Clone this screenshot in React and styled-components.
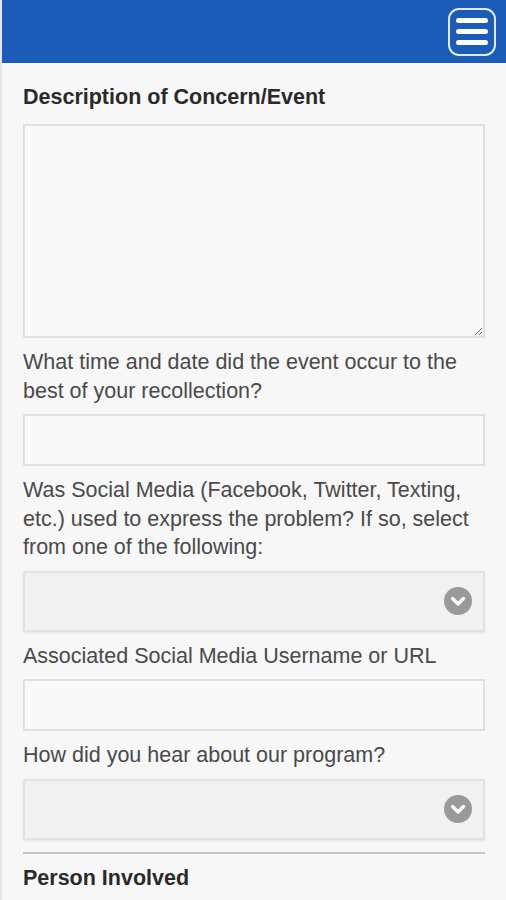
import React from 'react'
import styled, { createGlobalStyle } from 'styled-components'

const Global = createGlobalStyle`
  html, body {
    margin: 0;
    padding: 0;
    background: #f7f7f7;
    font-family: "Liberation Sans", Arial, sans-serif;
  }
`

const Page = styled.div`
  width: 506px;
  height: 900px;
  overflow: hidden;
  background: #f7f7f7;
  border-left: 2px solid #e6e6e6;
  box-sizing: border-box;
`

const Header = styled.header`
  height: 63px;
  background: #1b5cb8;
  display: flex;
  justify-content: flex-end;
  align-items: center;
  padding-right: 10px;
`

const MenuBtn = styled.button`
  width: 48px;
  height: 48px;
  border: 2px solid #dfe9f7;
  border-radius: 11px;
  background: transparent;
  display: flex;
  flex-direction: column;
  justify-content: center;
  align-items: center;
  gap: 6px;
  padding: 0;
  span {
    display: block;
    width: 32px;
    height: 5px;
    border-radius: 3px;
    background: #fff;
  }
`

const Form = styled.form`
  padding: 20px 21px 0 21px;
  display: flex;
  flex-direction: column;
`

const Heading = styled.h3`
  margin: 0 0 13px;
  font-size: 21.5px;
  font-weight: bold;
  color: #2a2a2a;
  line-height: 28px;
`

const Label = styled.label`
  font-size: 21.5px;
  line-height: 28.5px;
  color: #4a4a4a;
  margin: 10px 0 9px;
`

const TextArea = styled.textarea`
  height: 214px;
  border: 2px solid #e0e0e0;
  background: #f9f9f9;
  resize: vertical;
  box-sizing: border-box;
`

const Input = styled.input`
  height: 52px;
  border: 2px solid #e0e0e0;
  background: #f9f9f9;
  box-sizing: border-box;
`

const Select = styled.div`
  height: 61px;
  border: 2px solid #e2e2e2;
  background: #f1f1f1;
  box-sizing: border-box;
  display: flex;
  justify-content: flex-end;
  align-items: center;
  padding-right: 11px;
  box-shadow: 0 1px 2px rgba(0,0,0,0.08);
`

const Divider = styled.hr`
  border: none;
  border-top: 2px solid #c8c8c8;
  margin: 12px 0 10px;
`

const Chevron = () => (
  <svg width="28" height="28" viewBox="0 0 28 28">
    <circle cx="14" cy="14" r="14" fill="#9a9a9a" />
    <path d="M8.5 11.5 L14 17 L19.5 11.5" stroke="#fff" strokeWidth="3.2" fill="none" strokeLinecap="round" strokeLinejoin="round" />
  </svg>
)

const Cut = styled.div`
  font-size: 18px;
  color: #888;
  margin-top: -4px;
`

export default function App() {
  return (
    <Page>
      <Global />
      <Header>
        <MenuBtn type="button"><span /><span /><span /></MenuBtn>
      </Header>
      <Form>
        <Heading>Description of Concern/Event</Heading>
        <TextArea />
        <Label>What time and date did the event occur to the best of your recollection?</Label>
        <Input />
        <Label>Was Social Media (Facebook, Twitter, Texting, etc.) used to express the problem? If so, select from one of the following:</Label>
        <Select><Chevron /></Select>
        <Label>Associated Social Media Username or URL</Label>
        <Input />
        <Label>How did you hear about our program?</Label>
        <Select><Chevron /></Select>
        <Divider />
        <Heading>Person Involved</Heading>
        <Cut>First Name</Cut>
      </Form>
    </Page>
  )
}
